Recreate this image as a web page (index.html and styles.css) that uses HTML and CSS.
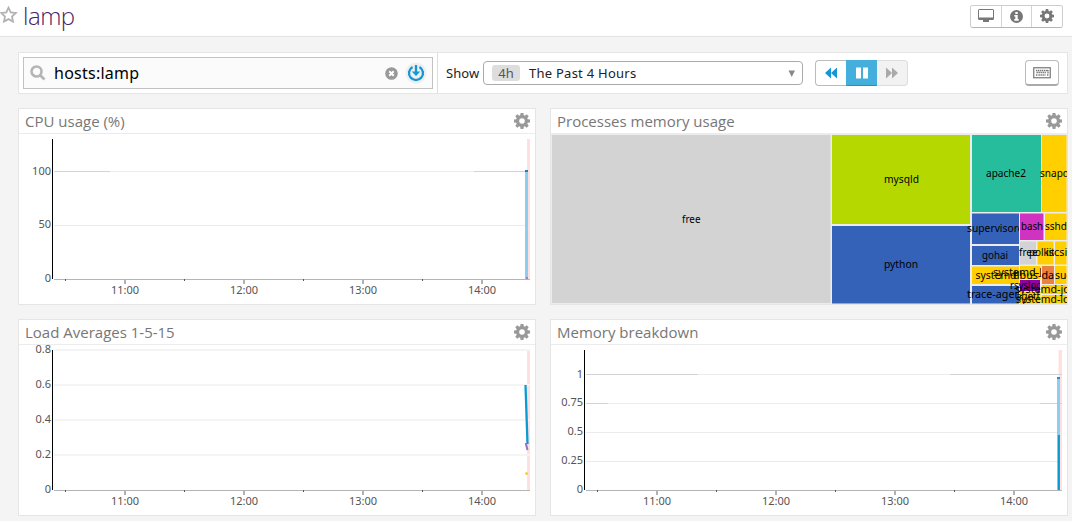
FILE: index.html
```html
<!DOCTYPE html>
<html lang="en">
<head>
<meta charset="utf-8">
<title>lamp</title>
<link rel="stylesheet" href="styles.css">
</head>
<body>
<svg class="defs" width="0" height="0" aria-hidden="true">
  <symbol id="gear" viewBox="0 0 16 16"><path fill-rule="evenodd" d="M6.6 0h2.8l.4 2.3 1 .45L12.7 1.3l2 2-1.4 1.95.45 1 2.25.35v2.8l-2.25.4-.45 1 1.4 1.9-2 2-1.9-1.35-1 .4L9.4 16H6.6l-.4-2.25-1-.4-1.9 1.35-2-2 1.4-1.9-.45-1L0 9.4V6.6l2.25-.35.45-1L1.3 3.3l2-2 1.9 1.45 1-.45zM8 5.2a2.8 2.8 0 1 0 0 5.6 2.8 2.8 0 0 0 0-5.6z"/></symbol>
  <symbol id="rew" viewBox="0 0 12 12"><path d="M6 .5v11L0 6zM12 .5v11L6 6z"/></symbol>
</svg>
<header class="topbar">
  <svg class="star" width="18" height="18" viewBox="0 0 18 18"><path d="M8.500 1.700l2.200 4.700 5.100.6-3.800 3.500 1 5.100-4.500-2.500L4 15.600l1-5.100L1.200 7l5.100-.6z"/></svg>
  <h1 class="page-title">lamp</h1>
  <div class="top-actions">
    <button class="top-btn"><svg width="16" height="14" viewBox="0 0 16 14"><path fill-rule="evenodd" d="M1.500 0h13A1.500 1.500 0 0 1 16 1.500v8a1.500 1.500 0 0 1-1.500 1.500H11v2H5v-2H1.500A1.500 1.500 0 0 1 0 9.500v-8A1.500 1.500 0 0 1 1.500 0zM1 1v7.500h14V1z"/></svg></button>
    <button class="top-btn"><svg width="13" height="13" viewBox="0 0 13 13"><circle cx="6.500" cy="6.500" r="6.500"/><path fill="#fff" d="M5.300 1.900h2.400v2H5.300zM4.300 4.900h3.400v4.200h1v1.600H4.300V9.100h1V6.500h-1z"/></svg></button>
    <button class="top-btn"><svg width="14" height="14"><use href="#gear"/></svg></button>
  </div>
</header>
<section class="toolbar">
  <div class="search-wrap">
    <div class="search">
      <svg class="lens" width="16" height="16" viewBox="0 0 16 16"><circle cx="6.500" cy="6.500" r="5"/><path d="M10 10l4.500 4.500"/></svg>
      <span class="query">hosts:lamp</span>
      <svg class="clear" width="13" height="13" viewBox="0 0 13 13"><circle cx="6.500" cy="6.500" r="6.300" fill="#999"/><path d="M4.300 4.300l4.400 4.400M8.700 4.300L4.300 8.700" stroke="#fff" stroke-width="2"/></svg>
      <svg class="apply" width="22" height="22" viewBox="0 0 22 22"><circle cx="11" cy="11" r="10.500" fill="#eee"/><path d="M7.600 5A7 7 0 1 0 14.400 5M11 3v9" fill="none" stroke="#1397d5" stroke-width="2.300"/><path d="M6.800 9.500h8.400L11 14z" fill="#1397d5"/></svg>
    </div>
  </div>
  <span class="show">Show</span>
  <div class="range"><span class="chip">4h</span><span class="range-name">The Past 4 Hours</span><svg class="caret" width="8" height="8" viewBox="0 0 8 8"><path d="M.500 .5h6.500L3.750 7z"/></svg></div>
  <div class="playback">
    <button class="play back"><svg width="12" height="12"><use href="#rew"/></svg></button>
    <button class="play pause"><svg width="12" height="12" viewBox="0 0 12 12"><path d="M0 .500h5v11H0zM7 .500h5v11H7z"/></svg></button>
    <button class="play forward"><svg width="12" height="12"><use href="#rew" transform="matrix(-1 0 0 1 12 0)"/></svg></button>
  </div>
  <button class="keyboard"><svg width="18" height="12" viewBox="0 0 18 12"><rect x=".750" y=".750" width="16.500" height="10" fill="none" stroke="#777" stroke-width="1.200"/><path d="M3 3.500h12M3.500 5.500h10M3 8h1.500M5.500 8h7M14 8h1.500M15 3v4" fill="none" stroke="#777" stroke-width="1.300" stroke-dasharray="1.400 .6"/></svg></button>
</section>
<main class="grid">
  <article class="panel">
    <div class="panel-head"><h2>CPU usage (%)</h2><svg class="gear" width="16" height="16"><use href="#gear"/></svg></div>
    <svg class="chart" width="516" height="170" viewBox="19 134 516 170">
      <path class="pink" d="M527 139h3v140h-3z"/>
      <path class="gridline" d="M54 171.500h476M54 225.500h476"/>
      <path class="gridline dark" d="M54 171.500h56M474 171.500h54"/>
      <path class="baseline" d="M54 279.500h476"/>
      <path class="yaxis" d="M52.500 139v140"/>
      <path class="major" d="M125 280v4M244 280v4M363 280v4M482 280v4"/>
      <path class="minor" d="M65.500 279v2M184.500 279v2M303.500 279v2M422.500 279v2"/>
      <path class="band" d="M526.500 171v108"/>
      <path d="M525 170h3v2h-3z" fill="#1387bd"/><path d="M526 277h2v2h-2z" fill="#a080c0"/>
      <g class="ylab"><text x="51" y="175">100</text><text x="51" y="228">50</text><text x="51" y="282">0</text></g>
      <g class="xlab"><text x="125" y="294">11:00</text><text x="244" y="294">12:00</text><text x="363" y="294">13:00</text><text x="482" y="294">14:00</text></g>
    </svg>
  </article>
  <article class="panel">
    <div class="panel-head"><h2>Processes memory usage</h2><svg class="gear" width="16" height="16"><use href="#gear"/></svg></div>
    <svg class="chart treemap" width="516" height="170" viewBox="551 134 516 170">
      <path fill="#ececec" d="M551 134h516v170H551z"/>
      <path fill="#d3d3d3" d="M552 135h278.500v168H552z"/>
      <path fill="#b5d800" d="M832 135h138v89H832z"/>
      <path fill="#3462b8" d="M832 226h138v77.500H832zM972 213.500h47V244h-47zM972 246h47v19h-47zM972 286h47v17.500h-47z"/>
      <path fill="#26bd9c" d="M972 135h69v77h-69z"/>
      <path fill="#ffcf00" d="M1042 135h24.500v77H1042zM1045 213.500h21.500V240H1045zM1037.500 241.500h16v23h-16zM1055 241.500h11.500v23H1055zM972 266.500h47V284h-47zM1020 266h20.500v13H1020zM1055 266h11.500v18H1055zM1020 292h20.500v11.500H1020zM1042 285h24.500v9H1042zM1042 295h24.500v8.500H1042z"/>
      <path fill="#d033bf" d="M1020 213.500h23.500V240H1020z"/>
      <path fill="#d3d3d3" d="M1020 241.500h16v23h-16z"/>
      <path fill="#9200a5" d="M1020 280h20v11h-20z"/>
      <path fill="#ea813d" d="M1042 266h12v18h-12z"/>
      <g class="cells">
        <text x="682" y="223" textLength="18.500" lengthAdjust="spacingAndGlyphs">free</text>
        <text x="884" y="183" textLength="35" lengthAdjust="spacingAndGlyphs">mysqld</text>
        <text x="884" y="268" textLength="34" lengthAdjust="spacingAndGlyphs">python</text>
        <text x="986" y="177" textLength="40" lengthAdjust="spacingAndGlyphs">apache2</text>
        <text x="1040" y="177" textLength="29" lengthAdjust="spacingAndGlyphs">snapd</text>
        <svg x="960" y="213" width="59" height="31" viewBox="960 213 59 31"><text x="967" y="232" textLength="57" lengthAdjust="spacingAndGlyphs">supervisord</text></svg>
        <text x="1021" y="230" textLength="22" lengthAdjust="spacingAndGlyphs">bash</text>
        <text x="1045" y="230" textLength="22" lengthAdjust="spacingAndGlyphs">sshd</text>
        <text x="982" y="259" textLength="26" lengthAdjust="spacingAndGlyphs">gohai</text>
        <text x="1019" y="256" textLength="18.500" lengthAdjust="spacingAndGlyphs">free</text>
        <svg x="1020" y="242" width="34" height="23" viewBox="1020 242 34 23"><text x="1029" y="256" textLength="32" lengthAdjust="spacingAndGlyphs">polkitd</text></svg>
        <text x="1046" y="256" textLength="28" lengthAdjust="spacingAndGlyphs">iscsid</text>
        <text x="975.500" y="279" textLength="41" lengthAdjust="spacingAndGlyphs">systemd</text>
        <svg x="960" y="266" width="81" height="13" viewBox="960 266 81 13"><text x="993" y="276" textLength="49" lengthAdjust="spacingAndGlyphs">systemd-l</text></svg>
        <text x="1013" y="279" textLength="41" lengthAdjust="spacingAndGlyphs">dbus-da</text>
        <text x="1055" y="279" textLength="24" lengthAdjust="spacingAndGlyphs">sudo</text>
        <svg x="960" y="280" width="80" height="12" viewBox="960 280 80 12"><text x="1010" y="289" textLength="38" lengthAdjust="spacingAndGlyphs">rsyslogd</text></svg>
        <svg x="960" y="285" width="59" height="19" viewBox="960 285 59 19"><text x="967" y="298" textLength="58" lengthAdjust="spacingAndGlyphs">trace-agent</text></svg>
        <svg x="960" y="288" width="80" height="16" viewBox="960 288 80 16"><text x="1016" y="300" textLength="29" lengthAdjust="spacingAndGlyphs">agetty</text></svg>
        <text x="1015" y="293" textLength="81" lengthAdjust="spacingAndGlyphs">systemd-journal</text>
        <text x="1016" y="303" textLength="75" lengthAdjust="spacingAndGlyphs">systemd-logind</text>
      </g>
    </svg>
  </article>
  <article class="panel">
    <div class="panel-head"><h2>Load Averages 1-5-15</h2><svg class="gear" width="16" height="16"><use href="#gear"/></svg></div>
    <svg class="chart" width="516" height="170" viewBox="19 345 516 170">
      <path class="pink" d="M527 350h3v140h-3z"/>
      <path class="gridline thick" d="M54 350h476M54 385h476M54 420h476M54 455h476"/>
      <path class="baseline" d="M54 490.500h476"/>
      <path class="yaxis" d="M52.500 350v140"/>
      <path class="major" d="M125 491v4M244 491v4M363 491v4M482 491v4"/>
      <path class="minor" d="M65.500 490v2M184.500 490v2M303.500 490v2M422.500 490v2"/>
      <path d="M525.500 385l2 59" stroke="#0b9bd3" stroke-width="2.300"/>
      <path d="M525.700 443l1.800 7" stroke="#9a6fc0" stroke-width="2"/>
      <circle cx="526.500" cy="473.500" r="1.300" fill="#f5c518"/>
      <g class="ylab"><text x="51" y="353">0.8</text><text x="51" y="388">0.6</text><text x="51" y="423">0.4</text><text x="51" y="458">0.2</text><text x="51" y="493">0</text></g>
      <g class="xlab"><text x="125" y="505">11:00</text><text x="244" y="505">12:00</text><text x="363" y="505">13:00</text><text x="482" y="505">14:00</text></g>
    </svg>
  </article>
  <article class="panel">
    <div class="panel-head"><h2>Memory breakdown</h2><svg class="gear" width="16" height="16"><use href="#gear"/></svg></div>
    <svg class="chart" width="516" height="170" viewBox="551 345 516 170">
      <path class="pink" d="M1058.500 350h3.500v140h-3.500z"/>
      <path class="gridline" d="M586 374.500h476M586 403.500h476M586 432.500h476M586 461.500h476"/>
      <path class="gridline dark" d="M586 374.500h112M950 374.500h112M586 403.500h22M1040 403.500h22"/>
      <path class="baseline" d="M586 490.500h476"/>
      <path class="yaxis" d="M584.500 350v140"/>
      <path class="major" d="M657 491v4M776 491v4M895 491v4M1014 491v4"/>
      <path class="minor" d="M597.500 490v2M716.500 490v2M835.500 490v2M954.500 490v2"/>
      <path class="band" d="M1058.500 378v57"/>
      <path d="M1058.700 435v55" stroke="#0b9bd3" stroke-width="2.500"/>
      <path d="M1057 377h3v2h-3z" fill="#1397d5"/>
      <g class="ylab"><text x="583" y="378">1</text><text x="583" y="406">0.75</text><text x="583" y="435">0.5</text><text x="583" y="464">0.25</text><text x="583" y="493">0</text></g>
      <g class="xlab"><text x="657" y="505">11:00</text><text x="776" y="505">12:00</text><text x="895" y="505">13:00</text><text x="1014" y="505">14:00</text></g>
    </svg>
  </article>
</main>
</body>
</html>
```
FILE: styles.css
```css
* { box-sizing: border-box; }
body { margin: 0; height: 521px; overflow: hidden; background: #f4f4f4; font-family: "Noto Sans", sans-serif; color: #222; }
svg { display: block; flex: none; }
.defs { position: absolute; }
button { padding: 0; margin: 0; background: #fff; border: 0; display: flex; align-items: center; justify-content: center; }
h1, h2 { margin: 0; font-weight: 400; }

.topbar { height: 37px; background: #fff; border-bottom: 1px solid #e2e2e2; display: flex; align-items: flex-start; padding-right: 9px; }
.star { margin-top: 6px; fill: none; stroke: #b3b3b3; stroke-width: 1.8; }
.page-title { margin-left: 5px; font: 300 24px/32px "Open Sans", sans-serif; letter-spacing: -0.5px; color: #4b2367; }
.top-actions { margin: 5px 0 0 auto; display: flex; width: 93px; height: 23px; border: 1px solid #ccc; border-bottom-color: #b5b5b5; border-radius: 3px; overflow: hidden; }
.top-btn { flex: 1; fill: #777; }
.top-btn svg { margin-top: -1px; }
.top-btn + .top-btn { border-left: 1px solid #d4d4d4; }

.toolbar { margin: 15px 4px 0 18px; height: 42px; background: #fff; border: 1px solid #e5e5e5; display: flex; align-items: center; }
.search-wrap { width: 419px; height: 40px; padding: 4px; border-right: 1px solid #ddd; }
.search { width: 410px; height: 32px; border: 1px solid #c2c2c2; background: #fbfbfb; display: flex; align-items: center; padding: 0 5px 0 6px; }
.lens { fill: none; stroke: #b5b5b5; stroke-width: 2.6; }
.query { margin-left: 8px; font-size: 16px; line-height: 30px; letter-spacing: 0.25px; color: #000; flex: 1; }
.apply { margin-left: 7px; }
.show { margin-left: 8px; width: 37px; font-size: 13px; letter-spacing: 0.1px; }
.range { width: 320px; height: 24px; border: 1px solid #aaa; border-radius: 4px; display: flex; align-items: center; padding: 0 6px 0 8px; font-size: 13px; line-height: 16px; }
.chip { width: 28px; height: 16px; background: #ddd; border-radius: 3px; text-align: center; color: #555; }
.range-name { margin-left: 9px; flex: 1; letter-spacing: 0.25px; }
.caret { fill: #888; margin-top: 2px; }
.playback { margin-left: 12px; display: flex; width: 93px; height: 26px; }
.play { width: 31px; border: 1px solid #bbb; }
.back { border-radius: 4px 0 0 4px; border-right: 0; fill: #1397d5; }
.pause { background: #44aedd; border-color: #44aedd; border-bottom-color: #1992cb; fill: #fff; }
.forward { background: #f2f2f2; border-color: #ddd; border-left: 0; border-radius: 0 4px 4px 0; fill: #aaa; }
.keyboard { margin: 0 8px 0 auto; width: 34px; height: 26px; border: 1px solid #bbb; border-bottom: 2px solid #aaa; border-radius: 4px; }

.grid { margin: 14px 4px 0 18px; display: grid; grid-template-columns: 518px 518px; gap: 14px; }
.panel { height: 197px; background: #fff; border: 1px solid #e5e5e5; }
.panel-head { height: 25px; border-bottom: 1px solid #ececec; display: flex; align-items: center; justify-content: space-between; padding: 0 5px 0 6px; }
.panel-head h2 { font: 400 15px/24px "Open Sans", sans-serif; color: #777; white-space: nowrap; }
.gear { fill: #999; margin-top: -1px; }

.chart text { font-size: 11px; }
.treemap text { fill: #000; }
.gridline { stroke: #ececec; fill: none; }
.dark { stroke: #d3d3d3; }
.thick { stroke: #f4f4f4; stroke-width: 2; }
.pink { fill: #ffe0e0; }
.baseline { stroke: #b5b5b5; }
.yaxis { stroke: #000; }
.major { stroke: #999; stroke-width: 1.5; }
.minor { stroke: #555; }
.band { stroke: #8ccdf0; stroke-width: 3; }
.ylab { text-anchor: end; fill: #555; }
.xlab { text-anchor: middle; fill: #555; }
```
